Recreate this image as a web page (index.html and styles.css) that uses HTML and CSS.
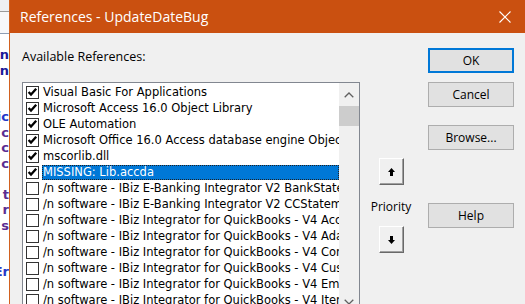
FILE: index.html
```html
<!DOCTYPE html>
<html lang="en">
<head>
    <meta charset="UTF-8">
    <meta name="viewport" content="width=device-width, initial-scale=1.0">
    <title>References - UpdateDateBug</title>
    <link rel="stylesheet" href="styles.css">
</head>
<body>
    <div class="screen">
        <!-- the code window peeking out behind the dialog -->
        <div class="behind">
            <div class="behind-menu"></div>
            <div class="behind-tools"></div>
            <div class="behind-code">
                <div class="code-line navy">n</div>
                <div class="code-line navy">n</div>
                <div class="code-line"></div>
                <div class="code-line"></div>
                <div class="code-line blue">ic</div>
                <div class="code-line purple">c</div>
                <div class="code-line purple">c</div>
                <div class="code-line purple">c</div>
                <div class="code-line"></div>
                <div class="code-line purple">t</div>
                <div class="code-line purple">r</div>
                <div class="code-line purple">s</div>
                <div class="code-line"></div>
                <div class="code-line"></div>
                <div class="code-line blue">Er</div>
            </div>
        </div>

        <div class="dialog">
            <div class="titlebar">
                <span class="title">References - UpdateDateBug</span>
                <svg class="close" width="12" height="12" viewBox="0 0 12 12">
                    <path d="M0.5 0.5 L11.5 11.5 M11.5 0.5 L0.5 11.5" stroke="#fff" stroke-width="1.1" fill="none"/>
                </svg>
            </div>

            <div class="dialog-body">
                <div class="refs">
                    <div class="refs-label">Available References:</div>
                    <div class="refs-box">
                        <ul class="refs-list">
                            <li class="ref"><span class="box checked"></span><span class="ref-name">Visual Basic For Applications</span></li>
                            <li class="ref"><span class="box checked"></span><span class="ref-name">Microsoft Access 16.0 Object Library</span></li>
                            <li class="ref"><span class="box checked"></span><span class="ref-name">OLE Automation</span></li>
                            <li class="ref"><span class="box checked"></span><span class="ref-name">Microsoft Office 16.0 Access database engine Object Library</span></li>
                            <li class="ref"><span class="box checked"></span><span class="ref-name">mscorlib.dll</span></li>
                            <li class="ref selected"><span class="box checked"></span><span class="ref-name">MISSING: Lib.accda</span></li>
                            <li class="ref"><span class="box"></span><span class="ref-name">/n software - IBiz E-Banking Integrator V2 BankStatement</span></li>
                            <li class="ref"><span class="box"></span><span class="ref-name">/n software - IBiz E-Banking Integrator V2 CCStatement</span></li>
                            <li class="ref"><span class="box"></span><span class="ref-name">/n software - IBiz Integrator for QuickBooks - V4 Account</span></li>
                            <li class="ref"><span class="box"></span><span class="ref-name">/n software - IBiz Integrator for QuickBooks - V4 Adapter</span></li>
                            <li class="ref"><span class="box"></span><span class="ref-name">/n software - IBiz Integrator for QuickBooks - V4 Company</span></li>
                            <li class="ref"><span class="box"></span><span class="ref-name">/n software - IBiz Integrator for QuickBooks - V4 Customer</span></li>
                            <li class="ref"><span class="box"></span><span class="ref-name">/n software - IBiz Integrator for QuickBooks - V4 Employee</span></li>
                            <li class="ref"><span class="box"></span><span class="ref-name">/n software - IBiz Integrator for QuickBooks - V4 Item</span></li>
                        </ul>
                        <div class="scrollbar">
                            <div class="sb-arrow">
                                <svg width="10" height="6" viewBox="0 0 10 6"><path d="M0.7 5.3 L5 1 L9.3 5.3" stroke="#606060" stroke-width="1.3" fill="none"/></svg>
                            </div>
                            <div class="sb-thumb"></div>
                            <div class="sb-track"></div>
                            <div class="sb-arrow">
                                <svg width="10" height="6" viewBox="0 0 10 6"><path d="M0.7 0.7 L5 5 L9.3 0.7" stroke="#606060" stroke-width="1.3" fill="none"/></svg>
                            </div>
                        </div>
                    </div>
                </div>

                <div class="priority">
                    <button class="arrow-btn" type="button">
                        <svg width="7" height="8" viewBox="0 0 7 8"><path d="M3.5 0 L7 4 L5 4 L5 8 L2 8 L2 4 L0 4 Z" fill="#000"/></svg>
                    </button>
                    <div class="priority-label">Priority</div>
                    <button class="arrow-btn" type="button">
                        <svg width="7" height="8" viewBox="0 0 7 8"><path d="M3.5 8 L7 4 L5 4 L5 0 L2 0 L2 4 L0 4 Z" fill="#000"/></svg>
                    </button>
                </div>

                <div class="actions">
                    <button class="btn btn-default" type="button">OK</button>
                    <button class="btn btn-cancel" type="button">Cancel</button>
                    <button class="btn btn-browse" type="button">Browse...</button>
                    <button class="btn btn-help" type="button">Help</button>
                </div>
            </div>
        </div>
    </div>
</body>
</html>
```

FILE: styles.css
```css
body {
    margin: 0;
    width: 525px;
    height: 304px;
    overflow: hidden;
    background: #f0f0f0;
}

.screen {
    display: flex;
    height: 304px;
}

/* window behind the dialog */
.behind {
    width: 9px;
    flex: none;
    display: flex;
    flex-direction: column;
    background: #fff;
    overflow: hidden;
}
.behind-menu {
    height: 11px;
    background: #eef0f3;
    border-bottom: 1px solid #9a9a9a;
}
.behind-tools {
    height: 21px;
    background: #f7f8fa;
    border-bottom: 1px solid #8e9db3;
}
.behind-code {
    padding-top: 13px;
    font-family: "DejaVu Sans", sans-serif;
    font-weight: bold;
    font-size: 13px;
}
.code-line {
    height: 15.5px;
    line-height: 15.5px;
    display: flex;
    justify-content: flex-end;
    white-space: nowrap;
}
.navy { color: #1a1a9a; }
.blue { color: #2438c8; }
.purple { color: #5b2d92; }

/* dialog */
.dialog {
    flex: 1;
    display: flex;
    flex-direction: column;
    border-left: 1px solid #d2611f;
    background: #f0f0f0;
}
.titlebar {
    height: 33px;
    flex: none;
    display: flex;
    align-items: center;
    justify-content: space-between;
    padding: 0 14px 0 10px;
    background: #ca5010;
    color: #fff;
    font-family: "Open Sans", sans-serif;
    font-size: 14px;
}
.close {
    display: block;
}

.dialog-body {
    display: grid;
    grid-template-columns: 338px 68px 86px;
    align-items: start;
    padding: 15px 0 0 12px;
    font-family: "Open Sans", sans-serif;
    font-size: 12px;
    color: #000;
}

.refs-label {
    margin-top: 1px;
    height: 16px;
    line-height: 16px;
    font-size: 12.5px;
}
.refs-box {
    margin-top: 17px;
    height: 230px;
    display: flex;
    border: 1px solid #828790;
    background: #fff;
}
.refs-list {
    flex: 1;
    min-width: 0;
    list-style: none;
    margin: 0;
    padding: 1px 0 0 3px;
    overflow: hidden;
}
.ref {
    height: 16px;
    display: flex;
    align-items: center;
    white-space: nowrap;
    font-family: "DejaVu Sans", sans-serif;
    font-size: 11.5px;
}
.box {
    width: 13px;
    height: 13px;
    flex: none;
    box-sizing: border-box;
    margin-right: 3px;
    border: 1px solid #333;
    background: #fff;
}
.box.checked {
    background: #fff url("data:image/svg+xml,%3Csvg xmlns='http://www.w3.org/2000/svg' width='11' height='11' viewBox='0 0 11 11'%3E%3Cpath d='M1.6 5 L4 7.6 L9.2 1.8' stroke='%23000' stroke-width='2.3' fill='none'/%3E%3C/svg%3E") no-repeat center;
}
.ref-name {
    flex: 1;
    min-width: 0;
    height: 15px;
    line-height: 15px;
    padding-left: 1px;
    overflow: hidden;
}
.selected .ref-name {
    background: #0078d7;
    color: #fff;
    outline: 1px dotted #222;
    outline-offset: -1px;
}

.scrollbar {
    width: 20px;
    flex: none;
    display: flex;
    flex-direction: column;
    background: #f0f0f0;
}
.sb-arrow {
    height: 23px;
    display: flex;
    align-items: center;
    justify-content: center;
}
.sb-thumb {
    height: 20px;
    background: #cdcdcd;
}
.sb-track {
    flex: 1;
}

/* priority arrows */
.priority {
    display: flex;
    flex-direction: column;
    align-items: center;
    padding: 110px 6px 0 0;
}
.arrow-btn {
    width: 25px;
    height: 27px;
    padding: 0;
    display: flex;
    align-items: center;
    justify-content: center;
    background: #f0f0f0;
    border: 1px solid;
    border-color: #fff #696969 #696969 #fff;
    box-shadow: inset -1px -1px #a0a0a0;
}
.priority-label {
    margin: 14px 0 11px;
    line-height: 16px;
}

/* command buttons */
.actions {
    display: flex;
    flex-direction: column;
}
.btn {
    height: 25px;
    padding: 0;
    font-family: "Open Sans", sans-serif;
    font-size: 12px;
    color: #000;
    background: #e1e1e1;
    border: 1px solid #adadad;
}
.btn-default {
    border: 2px solid #0078d7;
}
.btn-cancel { margin-top: 9px; }
.btn-browse { margin-top: 18px; }
.btn-help { margin-top: 53px; }
```
